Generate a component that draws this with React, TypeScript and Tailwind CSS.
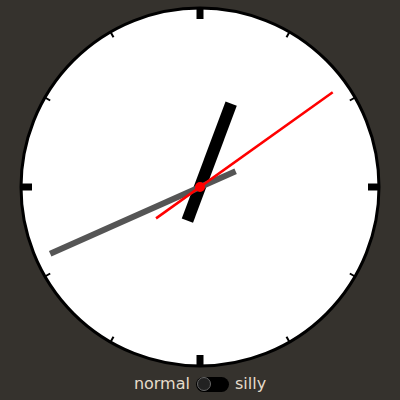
import React from "react";

export default function App() {
  const cx = 200;
  const cy = 187;
  const ticks = Array.from({ length: 12 }, (_, i) => i);
  return (
    <div className="w-[400px] h-[400px] bg-[#35322d] flex flex-col items-center" style={{ fontFamily: '"DejaVu Sans", sans-serif' }}>
      <svg width="400" height="372" viewBox="0 0 400 372" className="block">
        <circle cx={cx} cy={cy} r={179} fill="#ffffff" stroke="#000" strokeWidth={3} />
        {ticks.map((i) => {
          const major = i % 3 === 0;
          return (
            <line
              key={i}
              x1={cx}
              y1={cy - 179}
              x2={cx}
              y2={cy - (major ? 168 : 173)}
              stroke="#000"
              strokeWidth={major ? 7 : 2}
              transform={`rotate(${i * 30} ${cx} ${cy})`}
            />
          );
        })}
        <line x1={cx} y1={cy + 36} x2={cx} y2={cy - 89} stroke="#000" strokeWidth={12} transform={`rotate(20.5 ${cx} ${cy})`} />
        <line x1={cx} y1={cy + 39} x2={cx} y2={cy - 164} stroke="#555" strokeWidth={6} transform={`rotate(246 ${cx} ${cy})`} />
        <line x1={cx} y1={cy + 54} x2={cx} y2={cy - 163} stroke="#ff0000" strokeWidth={2.5} transform={`rotate(54.5 ${cx} ${cy})`} />
        <circle cx={cx} cy={cy} r={5} fill="#ff0000" />
      </svg>
      <div className="flex items-center gap-[6px] h-[24px] text-[16px] text-[#e6dccb]">
        <span>normal</span>
        <div className="w-[33px] h-[15px] rounded-full bg-black flex items-center pl-[1px]">
          <div className="w-[14px] h-[14px] rounded-full bg-[#222] border border-[#666]" />
        </div>
        <span>silly</span>
      </div>
    </div>
  );
}
